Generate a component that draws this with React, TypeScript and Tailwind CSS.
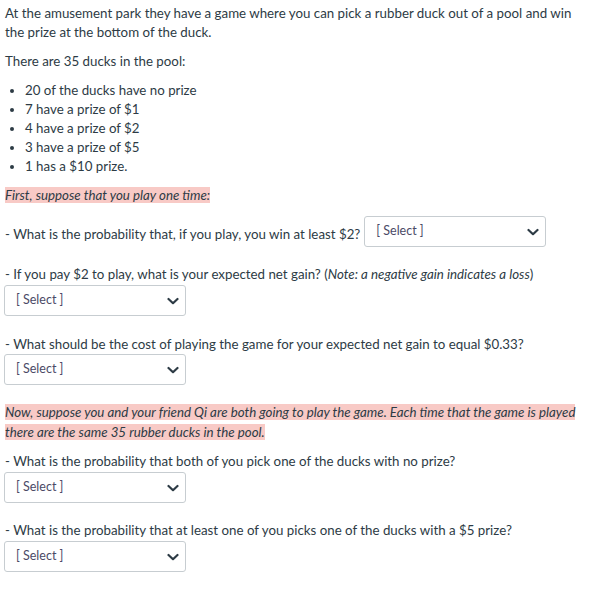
import React from "react";

function Select({ className = "" }: { className?: string }) {
  return (
    <div
      className={`flex h-[31px] w-[182px] items-center justify-between rounded-[3px] border border-[#c7cdd1] bg-white pl-[11px] pr-[5px] ${className}`}
    >
      <span className="text-[12.5px] leading-none text-[#4b4a66]">[ Select ]</span>
      <svg width="12" height="12" viewBox="0 0 12 12" className="mr-[1px]">
        <path d="M1.5 4 L6 8.2 L10.5 4" fill="none" stroke="#2d3b45" strokeWidth="2.2" strokeLinecap="round" strokeLinejoin="round" />
      </svg>
    </div>
  );
}

export default function App() {
  const hl = "bg-[#f8cac6]";
  return (
    <div
      className="w-[593px] h-[613px] bg-white pl-[5px] pr-[5px] pt-[4px] text-[13.3px] leading-[19px] text-[#2d3b45]"
      style={{ fontFamily: "Lato, 'Open Sans', sans-serif" }}
    >
      <p>
        At the amusement park they have a game where you can pick a rubber duck out of a pool and win the prize at the
        bottom of the duck.
      </p>
      <p className="mt-[10px]">There are 35 ducks in the pool:</p>
      <ul className="mt-[10px] list-disc pl-[20px]">
        <li>20 of the ducks have no prize</li>
        <li>7 have a prize of $1</li>
        <li>4 have a prize of $2</li>
        <li>3 have a prize of $5</li>
        <li>1 has a $10 prize.</li>
      </ul>
      <p className="mt-[10px]">
        <em className={hl}>First, suppose that you play one time:</em>
      </p>

      <div className="mt-[11px] flex items-start">
        <span className="mt-[9px]">- What is the probability that, if you play, you win at least $2?</span>
        <Select className="ml-[4px]" />
      </div>

      <p className="mt-[18px]">
        - If you pay $2 to play, what is your expected net gain? (<em>Note: a negative gain indicates a loss</em>)
      </p>
      <Select className="mt-[1px] -ml-[1px]" />

      <p className="mt-[19px]">- What should be the cost of playing the game for your expected net gain to equal $0.33?</p>
      <Select className="mt-0 -ml-[1px]" />

      <p className="mt-[17px] leading-[20px]">
        <em className={hl}>
          Now, suppose you and your friend Qi are both going to play the game. Each time that the game is played there
          are the same 35 rubber ducks in the pool.
        </em>
      </p>

      <p className="mt-[10px]">- What is the probability that both of you pick one of the ducks with no prize?</p>
      <Select className="mt-[1px] -ml-[1px]" />

      <p className="mt-[18px]">- What is the probability that at least one of you picks one of the ducks with a $5 prize?</p>
      <Select className="mt-[1px] -ml-[1px]" />
    </div>
  );
}
